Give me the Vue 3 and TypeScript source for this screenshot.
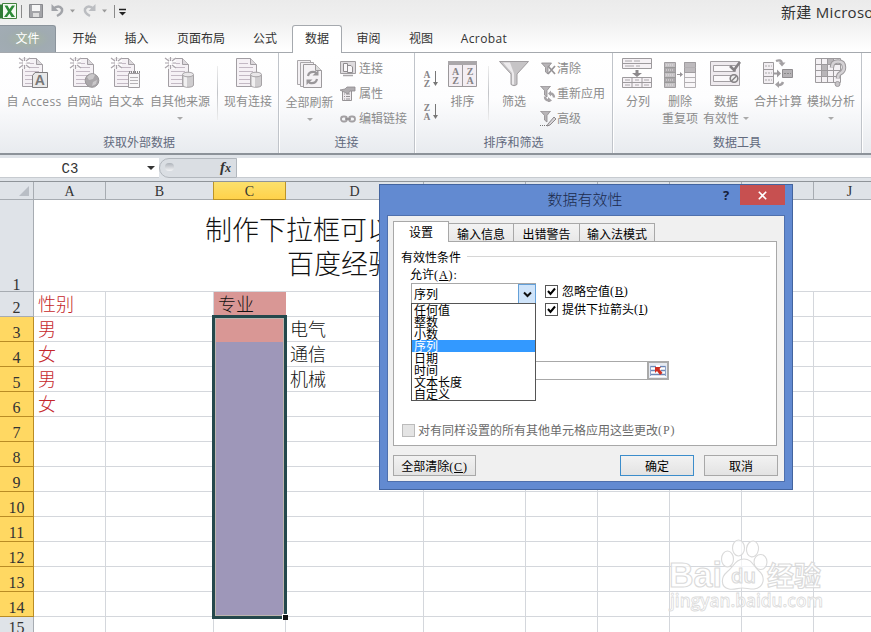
<script setup lang="ts">
type Tool = { icon: string; label: string[]; w: number; arrow?: boolean; inlineArrow?: boolean }
type Small = { icon: string; label: string }

const tabs = [
  { t: '开始', w: 57 }, { t: '插入', w: 47 }, { t: '页面布局', w: 82 }, { t: '公式', w: 50 },
  { t: '数据', w: 50, on: true }, { t: '审阅', w: 53 }, { t: '视图', w: 52 }, { t: 'Acrobat', w: 74 },
]

const ext: Tool[] = [
  { icon: 'access', label: ['自 Access'], w: 60 },
  { icon: 'web', label: ['自网站'], w: 41 },
  { icon: 'text', label: ['自文本'], w: 42 },
  { icon: 'other', label: ['自其他来源'], w: 66, arrow: true },
]
const links: Small[] = [
  { icon: 'conn', label: '连接' }, { icon: 'prop', label: '属性' }, { icon: 'chain', label: '编辑链接' },
]
const filters: Small[] = [
  { icon: 'fclear', label: '清除' }, { icon: 'freapply', label: '重新应用' }, { icon: 'fadv', label: '高级' },
]
const dataTools: Tool[] = [
  { icon: 'split', label: ['分列'], w: 42 },
  { icon: 'dedupe', label: ['删除', '重复项'], w: 42 },
  { icon: 'valid', label: ['数据', '有效性'], w: 50, inlineArrow: true },
  { icon: 'merge', label: ['合并计算'], w: 54 },
  { icon: 'whatif', label: ['模拟分析'], w: 52, arrow: true },
]

const cols = ['A', 'B', 'C', 'D', 'E', 'F', 'G', 'H', 'I', 'J']
const cells: Record<string, string> = {
  A2: '性别', A3: '男', A4: '女', A5: '男', A6: '女', C2: '专业', D3: '电气', D4: '通信', D5: '机械',
}
const rows = Array.from({ length: 14 }, (_, i) => i + 2)
const options = ['任何值', '整数', '小数', '序列', '日期', '时间', '文本长度', '自定义']

const page = (x: number, y: number) =>
  `<g transform="translate(${x} ${y})"><path d="M.5.5h14l6 6v22H.5z" fill="#f5f1f5" stroke="#a29ea3"/><path d="M14.500.5v6h6" fill="#dcd8dc" stroke="#a29ea3"/><path d="M3 5.500h9M3 9.500h14M3 13.500h14M3 17.500h14M3 21.500h14M3 25.500h14" stroke="#c3b9c4"/></g>`
const spark = `<path d="M0 0h11v12H0z" fill="#fff" fill-opacity=".75"/><path d="M0 1l4 3M5.500 0v4M11 1L7 4M0 6h4M7.500 6H11M0 11l4-3M5.500 8v4M11 11L7 8" stroke="#aaa4ab" stroke-width="1.200"/>`
const cyl = `<path d="M17.500 18v10c0 3 11 3 11 0V18z" fill="#cfcdcf" stroke="#a6a3a6"/><path d="M19 19v10l3 1V19z" fill="#f1f0f1"/><ellipse cx="23" cy="17.500" rx="5.500" ry="2.300" fill="#e9e7e9" stroke="#a6a3a6"/>`
const funnel = `<path d="M.5 1h10L7 5.500V12L4.500 10V5.500z" fill="#b8b5b8" stroke="#8c898c" stroke-width=".8"/>`

const icons: Record<string, string> = {
  access: page(3, 1) + spark + `<path d="M16 15.500h12.500v15H13.500v-12z" fill="#e8e8e8" stroke="#7e7c7e"/><text x="21" y="28" font-family="Liberation Sans" font-weight="700" font-size="14" text-anchor="middle" fill="#777">A</text>`,
  web: page(3, 1) + spark + `<circle cx="22" cy="23.500" r="6.800" fill="#aaa7aa" stroke="#979497"/><path d="M17 20q4-5 8-2l-2 4-4 1zM23 25l4-2-1 4-4 2z" fill="#cac8ca"/>`,
  text: page(3, 1) + spark + `<path d="M17.500 16.500h11v14h-11z" fill="#f8f7f8" stroke="#a09da0"/><path d="M18 15h11" stroke="#888" stroke-width="2" stroke-dasharray="1 1"/><path d="M19 20.500h8M19 23.500h8M19 26.500h8" stroke="#b5b2b5"/>`,
  other: page(3, 1) + spark + cyl,
  exist: page(3, 1) + cyl,
  refresh: `<path d="M3.500 2.500h13v24h-13z" fill="#f3f0f3" stroke="#aaa7aa"/><path d="M6.500 4.500h13v24h-13z" fill="#f3f0f3" stroke="#aaa7aa"/><path d="M9.500 6.500h12l6 6v17h-18z" fill="#f5f2f5" stroke="#9d9a9d"/><path d="M21.500 6.500v6h6" fill="#ddd" stroke="#9d9a9d"/><path d="M14 18q1-5 7-4l2 2M23 21q-1 5-7 4l-2-2" fill="none" stroke="#9a979a" stroke-width="2.200"/><path d="M24.500 12v5.500h-6zM12.500 27v-5.500h6z" fill="#9a979a"/>`,
  sort: `<path d="M.5 1.500h28v25H.5z" fill="#f3eef3" stroke="#9b989b"/><path d="M0 1h29v4H0z" fill="#aaa7aa"/><path d="M14.500 5v21" stroke="#9b989b"/><g font-family="Liberation Serif" font-weight="700" font-size="10" text-anchor="middle" fill="#858285"><text x="7.500" y="15">A</text><text x="7.500" y="24">Z</text><text x="22" y="15">Z</text><text x="22" y="24">A</text></g>`,
  funnel: `<path d="M.5 1.500h29L18 14v10.500q-3 2.500-6 0V14z" fill="#c6c4c6" stroke="#a09da0"/><path d="M4 2.500h7l4 11v11h-2V13z" fill="#eceaec"/>`,
  split: `<path d="M.5 1.500h29v10H.5zM.5 20.500h29v10H.5z" fill="#f5f1f5" stroke="#9d9a9d"/><path d="M.5 6.500h29M.5 25.500h29M10 20.500v10M20 20.500v10" stroke="#9d9a9d"/><path d="M3 4h7M12 4h6M3 9h9M14 9h4M3 23h5M13 23h4M22 23h5M3 28h5M13 28h4M22 28h5" stroke="#aaa7aa"/><path d="M13.500 13h3v3h3.500l-5 4-5-4h3.500z" fill="#8c898c"/>`,
  dedupe: `<path d="M.5 5.500h11v25H.5z" fill="#c4c1c4" stroke="#a09da0"/><path d="M.5 10.500h11M.5 15.500h11M.5 20.500h11M.5 25.500h11" stroke="#999"/><path d="M1 11h10v4H1zM1 21h10v4H1z" fill="#aaa7aa"/><path d="M2 8h8M2 13h8M2 18h8M2 23h8M2 28h8" stroke="#e6e6e6" stroke-dasharray="1 1"/><path d="M13 17.500h5" stroke="#969396"/><path d="M16 15l3 2.500-3 2.500z" fill="#969396"/><path d="M20.500 5.500h11v25h-11z" fill="#f8f6f8" stroke="#b3b0b3"/><path d="M20.500 5.500h11v10h-11z" fill="#bdbabd" stroke="#a09da0"/><path d="M20.500 10.500h11M20.500 20.500h11M20.500 25.500h11" stroke="#b3b0b3"/>`,
  valid: `<path d="M.5 4.500h29v24H.5z" fill="#eeeaee" stroke="#a39fa3"/><path d="M3.500 8.500h22v6h-22zM3.500 18.500h22v6h-22z" fill="#faf8fa" stroke="#a39fa3"/><path d="M20 9l4 4 6-8" fill="none" stroke="#858285" stroke-width="2.600"/><circle cx="24" cy="21.500" r="3.800" fill="#eee" stroke="#858285" stroke-width="1.600"/><path d="M21.500 24l5-5" stroke="#858285" stroke-width="1.500"/>`,
  merge: `<path d="M1.500 5.500h10v21h-10z" fill="#f2eef2" stroke="#9d9a9d"/><path d="M1.500 12.500h10M1.500 19.500h10" stroke="#9d9a9d"/><path d="M3 9h7M3 16h7M3 23h7" stroke="#aaa" stroke-dasharray="2 1"/><path d="M12 15.500h3v-3l4 4-4 4v-3h-3z" fill="#9d9a9d"/><path d="M20.500 12.500h10v8h-10z" fill="#b5b2b5" stroke="#8f8c8f"/><path d="M22 16.500h7" stroke="#888" stroke-dasharray="2 1"/><path d="M14 4q5-2 6 2M21 25q-1 3-4 3" fill="none" stroke="#a3a0a3" stroke-width="2.400"/><path d="M16.500 5.500h7l-3.500 4zM13 27.500l4-3.500v7z" fill="#a3a0a3"/>`,
  whatif: `<path d="M.5 1.500h25v24H.5z" fill="#f4f1f4" stroke="#9d9a9d"/><path d="M.5 7.500h25M.5 13.500h25M.5 19.500h25M6.500 1.500v24M12.500 1.500v24M18.500 1.500v24" stroke="#9d9a9d"/><path d="M7 8h5v5H7zM13 2h5v5h-5zM7 14h5v5H7z" fill="#b8b5b8"/><path d="M17 10.500q0-6 6-6t6 6q0 4-4 6-2 1-2 5" fill="none" stroke="#9d9a9d" stroke-width="4.500"/><path d="M17 10.500q0-6 6-6t6 6q0 4-4 6-2 1-2 5" fill="none" stroke="#d5d2d5" stroke-width="2.500"/><circle cx="22.500" cy="27" r="2.500" fill="#c8c5c8" stroke="#9d9a9d"/>`,
  conn: `<path d="M.5.500h15v12H.5z" fill="#dedbde" stroke="#a09da0"/><path d="M3.500 2.500h4v8h-4zM7.500 4.500h3.500l1.500 1.500v5.500h-5z" fill="#faf8fa" stroke="#8f8c8f"/><path d="M3 14.500h10" stroke="#aaa7aa" stroke-width="1.500"/>`,
  prop: `<path d="M2.500 4.500h9v10h-9z" fill="#efebef" stroke="#969396"/><path d="M4 8h1M6 8h4M4 10.500h1M6 10.500h4M4 13h1M6 13h4" stroke="#969396"/><path d="M0 4l5-1 2-2h8v4h-5l-2 3z" fill="#b0adb0" stroke="#8f8c8f" stroke-width=".8"/>`,
  chain: `<g fill="none" stroke="#a3a0a3" stroke-width="1.800"><rect x="1" y="5.500" width="6" height="5" rx="2.500"/><rect x="9" y="5.500" width="6" height="5" rx="2.500"/></g><path d="M5 8h6" stroke="#8f8c8f" stroke-width="1.500"/>`,
  fclear: `<g transform="translate(1 1)">${funnel}</g><path d="M8 5l7 8M15 5l-7 8" stroke="#969396" stroke-width="1.700"/>`,
  freapply: `<g transform="translate(0 -1)">${funnel}</g><path d="M5 10.500q0 4 4 4M14 11.500q0-4-4-4" fill="none" stroke="#a5a2a5" stroke-width="2.400"/><path d="M8 11l4 3.500-4 2.500zM11 4.500v6L8 7.500z" fill="#a5a2a5"/>`,
  fadv: `<g transform="translate(0 -1)">${funnel}</g><path d="M0 14.500h7" stroke="#777" stroke-dasharray="1 1"/><path d="M8 13l6-7 2 2-6 6-3 1z" fill="#d5d2d5" stroke="#8c898c"/>`,
}
</script>

<template>
  <div class="app">
    <header class="top">
      <div class="quick">
        <svg width="130" height="24" viewBox="0 0 130 24">
          <path d="M2.500 3.500h14v15h-14z" fill="#f4faf2" stroke="#43823f" />
          <path d="M0 4.500h3v14H0z" fill="#2f7a35" />
          <path d="M4.500 5.500l3 0 2 3.500 2.500-3.500h3l-4 6 4 5.500h-3.500l-2-3.500-2.500 3.500h-3l4-5.500z" fill="#2c8a36" />
          <path d="M21.500 5v13M114.500 5v13" stroke="#8a8a8a" />
          <path d="M29.500 4.500h13v13h-13z" fill="#a3a4a8" stroke="#88898d" />
          <path d="M32 5h8v6h-8z" fill="#f6f6f6" /><path d="M33 13h6v4h-6z" fill="#ddd" />
          <path d="M53 9q6-5 9 0 1 4-5 7" fill="none" stroke="#a2a4a9" stroke-width="2.500" />
          <path d="M51.500 4v7h7z" fill="#a2a4a9" />
          <path d="M94 9q-6-5-9 0-1 4 5 7" fill="none" stroke="#bbbdc1" stroke-width="2.500" />
          <path d="M95.500 4v7h-7z" fill="#bbbdc1" />
          <path d="M70 9.500h5l-2.500 3zM102 9.500h5l-2.500 3z" fill="#9a9a9a" />
          <path d="M119 9.500h7" stroke="#222" stroke-width="1.500" /><path d="M119 12h7l-3.500 3.500z" fill="#222" />
        </svg>
        <span class="doc">新建 Microsoft Excel 工作表</span>
      </div>
      <nav class="tabs">
        <div class="file">文件</div>
        <div v-for="t in tabs" :key="t.t" class="tab" :class="{ on: t.on, pre: t.t === '公式', lat: t.t === 'Acrobat' }" :style="{ width: t.w + 'px' }">{{ t.t }}</div>
      </nav>
    </header>

    <section class="ribbon">
      <div class="group g1">
        <div class="tools">
          <div v-for="t in ext" :key="t.icon" class="tool" :class="t.icon" :style="{ width: t.w + 'px' }">
            <svg width="32" height="32" v-html="icons[t.icon]" />
            <span>{{ t.label[0] }}</span>
            <i v-if="t.arrow" class="arr" />
          </div>
          <div class="sep" />
          <div class="tool exist"><svg width="32" height="32" v-html="icons.exist" /><span>现有连接</span></div>
        </div>
        <div class="name">获取外部数据</div>
      </div>
      <div class="group g2">
        <div class="tools">
          <div class="tool all"><svg width="32" height="32" v-html="icons.refresh" /><span>全部刷新</span><i class="arr" /></div>
          <div class="smalls">
            <div v-for="s in links" :key="s.icon" class="small"><svg width="16" height="16" v-html="icons[s.icon]" /><span>{{ s.label }}</span></div>
          </div>
        </div>
        <div class="name">连接</div>
      </div>
      <div class="group g3">
        <div class="tools">
          <div class="az">
            <svg v-for="p in [['A', 'Z'], ['Z', 'A']]" :key="p[0]" width="16" height="18">
              <g font-family="Liberation Serif" font-size="9.500" font-weight="700" fill="#868386" text-anchor="middle"><text x="4" y="8">{{ p[0] }}</text><text x="4" y="16.500">{{ p[1] }}</text></g>
              <path d="M12.500 1v13" stroke="#777" /><path d="M10 12h5l-2.500 4z" fill="#777" />
            </svg>
          </div>
          <div class="tool sort"><svg width="29" height="28" v-html="icons.sort" /><span>排序</span></div>
          <div class="sep s3" />
          <div class="tool filt"><svg width="30" height="28" v-html="icons.funnel" /><span>筛选</span></div>
          <div class="smalls">
            <div v-for="s in filters" :key="s.icon" class="small"><svg width="17" height="16" v-html="icons[s.icon]" /><span>{{ s.label }}</span></div>
          </div>
        </div>
        <div class="name">排序和筛选</div>
      </div>
      <div class="group g4">
        <div class="tools">
          <div v-for="t in dataTools" :key="t.icon" class="tool" :style="{ width: t.w + 'px' }">
            <svg width="32" height="32" v-html="icons[t.icon]" />
            <span v-for="(l, i) in t.label" :key="l">{{ l }}<i v-if="t.inlineArrow && i === 1" class="arr in" /></span>
            <i v-if="t.arrow" class="arr" />
          </div>
        </div>
        <div class="name">数据工具</div>
      </div>
      <div class="next" />
    </section>

    <section class="fbar">
      <div class="namebox"><span>C3</span><i class="arr dark" /></div>
      <div class="fx"><i class="knob" /><b>f<small>x</small></b></div>
      <div class="formula" />
    </section>

    <main class="sheet">
      <div class="row heads">
        <div class="corner"><svg width="10" height="10"><path d="M10 0v10H0z" fill="#b9bec5" /></svg></div>
        <div v-for="c in cols" :key="c" class="ch" :class="{ sel: c === 'C' }">{{ c }}</div>
      </div>
      <div class="row first">
        <div class="rh">1</div>
        <div class="merged"><p>制作下拉框可以</p><p class="l2">百度经验</p></div>
      </div>
      <div v-for="r in rows" :key="r" class="row">
        <div class="rh" :class="{ sel: r > 2 && r < 15, last: r === 15 }">{{ r }}</div>
        <div v-for="c in cols" :key="c" class="cell" :class="{ red: c === 'A', pink: c === 'C' && r < 4, violet: c === 'C' && r > 3 && r < 15 }">{{ cells[c + r] }}</div>
      </div>
      <div class="range"><i /></div>
    </main>

    <svg class="mark" width="165" height="84" viewBox="0 0 165 84">
      <g fill="#fff" fill-opacity=".7" stroke="#dadada" stroke-width="1.100">
        <text x="1" y="48" font-family="Liberation Sans" font-weight="700" font-size="35" textLength="53" lengthAdjust="spacingAndGlyphs">Bai</text>
        <ellipse cx="59.500" cy="20" rx="6" ry="8" /><ellipse cx="70.500" cy="9" rx="6" ry="8" /><ellipse cx="84.500" cy="10" rx="6" ry="8" transform="rotate(8 85 10)" /><ellipse cx="92.500" cy="23" rx="6.500" ry="7.500" />
        <path d="M76 20c8 0 9 7 15 12 7 6 5 17-5 18-5 0-8-1-12-1s-8 2-13 1c-9-2-8-12-2-17 7-6 9-13 17-13z" />
        <text x="63" y="44" font-family="Open Sans" font-weight="600" font-size="20" textLength="25">du</text>
        <text x="99" y="47" font-family="Noto Sans CJK SC" font-weight="700" font-size="27" textLength="54">经验</text>
        <text x="2" y="68" font-family="Open Sans" font-weight="600" font-size="18" textLength="153" lengthAdjust="spacingAndGlyphs" stroke-width=".8">jingyan.baidu.com</text>
      </g>
    </svg>

    <div class="dialog">
      <div class="bar"><span class="cap">数据有效性</span><span class="help">?</span><span class="close"><svg width="9" height="9"><path d="M.8.8l7.400 7.400M8.200.8L.8 8.200" stroke="#fff" stroke-width="1.600" /></svg></span></div>
      <div class="body">
        <div class="dtabs"><div class="dt on">设置</div><div class="dt a">输入信息</div><div class="dt b">出错警告</div><div class="dt c">输入法模式</div></div>
        <div class="pane">
          <div class="legend"><span>有效性条件</span><hr /></div>
          <div class="allow">允许<em>(<u>A</u>):</em></div>
          <div class="fields">
            <div class="combo"><span>序列</span><div class="dd"><svg width="9" height="7"><path d="M1 1.500l3.500 3.500L8 1.500" fill="none" stroke="#111" stroke-width="2" /></svg></div>
              <div class="list"><div v-for="o in options" :key="o" class="opt" :class="{ hot: o === '序列' }">{{ o }}</div></div>
            </div>
            <div class="checks">
              <label v-for="k in [['忽略空值', 'B'], ['提供下拉箭头', 'I']]" :key="k[1]"><span class="cb"><svg width="11" height="11"><path d="M2 5l2.500 3L9 2.500" fill="none" stroke="#000" stroke-width="2" /></svg></span>{{ k[0] }}<em>(<u>{{ k[1] }}</u>)</em></label>
            </div>
          </div>
          <div class="source"><div class="pick"><svg width="16" height="12"><path d="M0 0h16v12H0z" fill="#fff" /><path d="M0 1.500h6M10 1.500h6M0 5.500h5M11 5.500h5M0 9.500h16" stroke="#6d87b7" stroke-width="1.500" /><path d="M.5 1v10M15.500 1v10" stroke="#8ea4cc" /><path d="M5 2h6L9.500 4l3 4-2.500 2-3-4L5 8z" fill="#cf2f22" /></svg></div></div>
          <label class="apply"><span class="cb off" />对有同样设置的所有其他单元格应用这些更改<em>(P)</em></label>
        </div>
        <div class="btns"><div class="btn clear">全部清除<em>(<u>C</u>)</em></div><div class="btn ok">确定</div><div class="btn">取消</div></div>
      </div>
    </div>
  </div>
</template>

<style>
body { margin: 0; overflow: hidden; }
</style>

<style scoped>
.app { position: relative; width: 871px; height: 632px; overflow: hidden; background: #fff; font: 12px/16px "Open Sans", "Noto Sans CJK SC", sans-serif; color: #333; }
.app * { box-sizing: border-box; }
.top { height: 53px; background: linear-gradient(#ebebeb, #f0f0f0 40%, #fff); border-bottom: 1px solid #a5a9ae; }
.quick { height: 25px; display: flex; justify-content: space-between; }
.doc { width: 90px; white-space: nowrap; font-size: 15px; line-height: 25px; color: #333; letter-spacing: .3px; }
.tabs { display: flex; height: 28px; }
.file { width: 56px; height: 27px; background: radial-gradient(ellipse at 50% 50%, #a4b3a2 10%, #a0abb1 55%, #a2acb5); border: 1px solid #8b949c; border-left: 0; border-bottom: 0; border-radius: 0 3px 0 0; color: #fff; text-align: center; line-height: 26px; }
.tab { text-align: center; line-height: 27px; height: 28px; white-space: nowrap; }
.tab.pre { padding-right: 4px; }
.tab.on { background: #fff; border: 1px solid #a5a9ae; border-bottom: 0; border-radius: 3px 3px 0 0; line-height: 26px; }
.tab.lat { letter-spacing: .4px; }

.ribbon { height: 102px; display: flex; background: linear-gradient(#fff 0, #fdfdfe 45%, #e8ebef 100%); border-bottom: 2px solid #8c9299; }
.group { display: flex; flex-direction: column; border-right: 1px solid #c0c4ca; box-shadow: 1px 0 #fff; }
.g1 { width: 279px; }
.g2 { width: 136px; }
.g3 { width: 198px; }
.g4 { width: 249px; }
.tools { height: 80px; display: flex; color: #8c8c8c; }
.name { text-align: center; line-height: 21px; color: #626a7d; }
.g1 .tools { padding-left: 4px; }
.tool { display: flex; flex-direction: column; align-items: center; padding-top: 4px; white-space: nowrap; line-height: 17px; }
.tool.access { letter-spacing: .35px; }
.tool svg { flex: none; margin-bottom: 4px; overflow: visible; }
.g1 .tool svg { margin-left: 2px; }
.arr { display: block; width: 0; height: 0; border: 3px solid transparent; border-top-color: #aaa; border-bottom: 0; margin-top: 7px; }
.arr.in { display: inline-block; margin: 0 0 3px 4px; }
.sep { width: 1px; height: 54px; margin: 13px 3px 0 4px; background: linear-gradient(#eee, #c2c4c8, #eee); }
.exist { width: 54px; }
.all { width: 61px; padding-top: 5px; }
.smalls { padding-top: 4px; }
.small { display: flex; height: 24.700px; align-items: center; gap: 3px; white-space: nowrap; }
.az { width: 24px; padding: 17px 0 0 8px; display: flex; flex-direction: column; gap: 15px; }
.az svg { overflow: visible; flex: none; }
.sort { width: 47px; }
.s3 { margin: 13px 0 0 2px; }
.filt { width: 50px; }
.g3 .smalls { padding-left: 1px; }
.g3 .small { gap: 0; }
.g3 .sort, .g3 .filt { padding-top: 7px; }
.g3 .tool svg { margin-bottom: 5px; }
.g4 .tools { padding-left: 4px; }
.next { width: 9px; }

.fbar { height: 27px; display: flex; background: #dfe3e8; padding: 3px 0; border-bottom: 1px solid #8f9499; }
.namebox { width: 159px; height: 20px; background: #fff; border-bottom: 1px solid #c7cbd0; display: flex; align-items: center; }
.namebox span { width: 140px; text-align: center; font: 14px/20px "Liberation Mono", monospace; padding-top: 2px; }
.arr.dark { border-width: 4px; border-bottom: 0; border-top-color: #333; margin: 0 0 0 7px; }
.fx { width: 78px; height: 20px; display: flex; justify-content: space-between; align-items: center; border: 1px solid #b2b7bd; border-radius: 10px 0 0 10px; padding: 0 5px 2px 5px; background: #dadee3; }
.knob { width: 9px; height: 8px; border-radius: 5px; background: linear-gradient(#aeb3ba, #f3f4f6); }
.fx b { font: italic bold 15px/16px "Liberation Serif", serif; }
.fx small { font-size: 12px; }
.formula { flex: 1; height: 20px; background: #fff; border-bottom: 1px solid #c7cbd0; }

.sheet { position: relative; font-family: "Liberation Sans", "Noto Sans CJK SC", sans-serif; }
.row { display: grid; grid-template-columns: 34px 72px 108px 72px 138px 102px repeat(5, 72px); height: 25px; width: 886px; }
.heads { height: 18px; }
.corner, .ch, .rh { background: #dfe3e8; border-right: 1px solid #a7acb2; border-bottom: 1px solid #a7acb2; font-family: "Liberation Serif", serif; text-align: center; }
.corner { display: flex; justify-content: flex-end; align-items: center; padding: 0 4px 0 0; }
.ch { font-size: 14px; line-height: 20px; height: 18px; }
.ch.sel { background: linear-gradient(#fbe06c, #ffd24a); border-color: #bd9427; box-shadow: -1px 0 #bd9427; }
.rh { font-size: 16px; line-height: 31px; height: 25px; overflow: hidden; }
.rh.last { line-height: 22px; }
.rh.sel { background: #ffd862; border-color: #b98c25; }
.first { height: 92px; }
.first .rh { height: 92px; padding-top: 69px; }
.merged { grid-column: 2 / -1; border-bottom: 1px solid #d4d7dc; padding: 14px 0 0 171px; font-size: 27px; color: #111; font-weight: 300; }
.merged p { margin: 0; line-height: 34px; white-space: nowrap; }
.merged .l2 { padding-left: 82px; }
.cell { border-right: 1px solid #d4d7dc; border-bottom: 1px solid #d4d7dc; padding-left: 4px; font-size: 18px; line-height: 27px; height: 25px; color: #111; white-space: nowrap; overflow: hidden; font-weight: 300; }
.cell.red { color: #c5272b; }
.cell.pink { background: #d99795; border-color: #d99795; }
.cell.violet { background: #9e97b9; border-color: #9e97b9; }
.range { position: absolute; left: 212px; top: 133px; width: 75px; height: 304px; border: 3px solid #24484c; box-shadow: inset 0 0 0 1px #bdb4ae; }
.range i { position: absolute; right: -4px; bottom: -4px; width: 6px; height: 6px; background: #111; border: solid #fff; border-width: 1px 0 0 1px; }
.mark { position: absolute; left: 668px; top: 539px; }

.dialog { position: absolute; left: 379px; top: 184px; width: 414px; height: 306px; background: #628ad1; border: 1px solid #43649f; padding: 0 7px 7px; font: 12px/16px "Noto Sans CJK SC", sans-serif; color: #000; }
.bar { height: 30px; display: flex; }
.cap { width: 96px; margin-left: 150px; text-align: center; font-size: 15px; line-height: 28px; color: #1c2a4c; font-weight: 300; }
.help { width: 14px; margin: 0 7px 0 auto; font: bold 13px/21px "Open Sans", sans-serif; color: #15203a; text-align: center; }
.close { width: 45px; height: 20px; background: #c75050; display: flex; align-items: center; justify-content: center; }
.body { height: 267px; background: #f0f0f0; border: 1px solid #4f70ad; padding: 5px 5px 0 5px; }
.dtabs { display: flex; align-items: flex-end; height: 21px; margin-bottom: -1px; position: relative; }
.dt { height: 19px; background: linear-gradient(#f3f3f3, #e8e8e8); border: 1px solid #a8a8a8; border-left: 0; text-align: center; line-height: 19px; }
.dt.on { width: 56px; height: 21px; background: #fff; border-left: 1px solid #a8a8a8; border-bottom: 0; line-height: 20px; }
.dt.a { width: 65px; }
.dt.b { width: 66px; }
.dt.c { width: 75px; }
.pane { width: 384px; height: 205px; background: #fff; border: 1px solid #a8a8a8; padding: 6px 6px 0 7px; }
.legend { display: flex; align-items: center; gap: 6px; height: 17px; }
.legend hr { flex: 1; border: 0; border-top: 1px solid #d6d6d6; margin: 0; }
.allow { padding-left: 9px; height: 18px; line-height: 18px; }
em { font: 12px "Liberation Serif", serif; letter-spacing: .9px; }
.fields { display: flex; padding-left: 10px; height: 78px; }
.combo { position: relative; width: 125px; height: 21px; border: 1px solid #a8a8a8; display: flex; justify-content: space-between; line-height: 19px; padding-left: 2px; }
.dd { width: 18px; height: 20px; margin-right: -1px; background: #cfe4fa; border: 1px solid #64a0d8; display: flex; align-items: center; justify-content: center; }
.list { position: absolute; left: -1px; top: 19px; width: 125px; height: 98px; background: #fff; border: 1px solid #555; z-index: 1; }
.opt { height: 12px; line-height: 12px; padding-left: 2px; }
.hot { background: #3399ff; color: #fff; }
.checks { padding-left: 9px; }
.checks label, .apply { display: flex; align-items: center; height: 18px; white-space: nowrap; }
.checks label { margin-top: -1px; margin-bottom: 1px; }
.cb { width: 13px; height: 13px; border: 1px solid #555; margin-right: 4px; display: flex; background: #fff; }
.cb.off { background: #e4e4e4; border-color: #bbb; margin-right: 3px; }
.source { width: 258px; height: 19px; margin-left: 10px; border: 1px solid #a8a8a8; display: flex; justify-content: flex-end; }
.pick { width: 22px; height: 19px; margin: -1px; border: 2px solid #aaa; background: #e6eaf1; display: flex; align-items: center; justify-content: center; }
.apply { margin-top: 41px; color: #6b6b6b; padding-left: 1px; }
.btns { display: flex; margin-top: 9px; width: 385px; gap: 10px; }
.btn { width: 74px; height: 21px; border: 1px solid #a8a8a8; background: linear-gradient(#f2f2f2, #e3e3e3); text-align: center; line-height: 20px; }
.clear { width: 83px; margin-right: auto; }
.ok { border-color: #3c8dcb; }
</style>
